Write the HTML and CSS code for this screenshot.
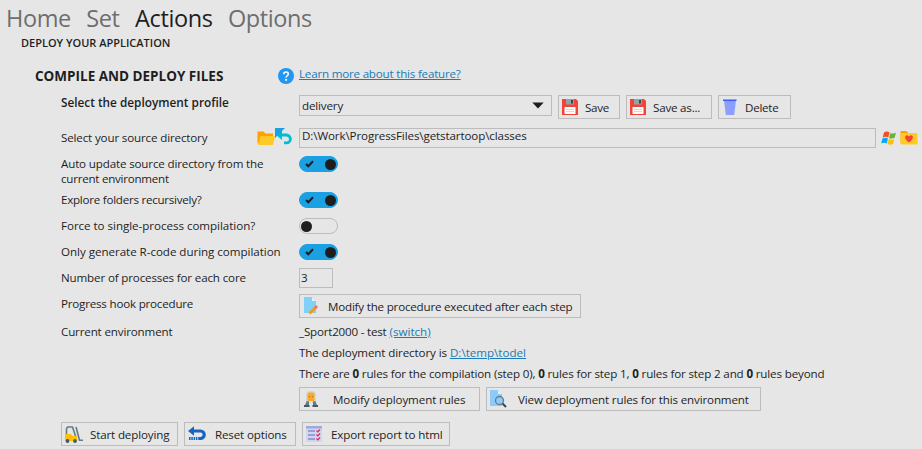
FILE: index.html
```html
<!DOCTYPE html>
<html lang="en">
<head>
<meta charset="utf-8">
<title>Deploy your application</title>
<link rel="stylesheet" href="styles.css">
</head>
<body>
<nav class="tabs"><a>Home</a><a>Set</a><a class="active">Actions</a><a>Options</a></nav>
<h1 class="page-title">DEPLOY YOUR APPLICATION</h1>
<main class="form">
  <h2 class="section-title">COMPILE AND DEPLOY FILES</h2>
  <div class="icons help"><svg width="16" height="16" viewBox="0 0 16 16"><circle cx="8" cy="8" r="8" fill="#2196f3"/><path d="M5.800 6.200c0-3 4.500-2.900 4.500-.2 0 1.700-2.200 1.800-2.200 3.500" fill="none" stroke="#fff" stroke-width="1.600"/><circle cx="8.100" cy="11.800" r="1.100" fill="#fff"/></svg></div>
  <div class="value learn"><a class="link t20">Learn more about this feature?</a></div>

  <div class="label strong">Select the deployment profile</div>
  <div class="value row">
    <div class="select"><span class="t15">delivery</span><svg width="12" height="7" viewBox="0 0 12 7"><path d="M.3.5h11.400L6 6.500z" fill="#1e1e1e"/></svg></div>
    <button class="btn save"><svg width="16" height="16" viewBox="0 0 16 16"><path d="M0 0h14l2 2v14H0z" fill="#f44336"/><path d="M4 0h8v5.500H4z" fill="#90a4ae"/><path d="M9 1h2v3.500H9z" fill="#37474f"/><path d="M2.500 8h11v7h-11z" fill="#fff"/><path d="M4 10.500h8M4 12.500h8" stroke="#cfd8dc"/></svg><span class="t25">Save</span></button>
    <button class="btn saveas"><svg width="16" height="16" viewBox="0 0 16 16"><path d="M0 0h14l2 2v14H0z" fill="#f44336"/><path d="M4 0h8v5.500H4z" fill="#90a4ae"/><path d="M9 1h2v3.500H9z" fill="#37474f"/><path d="M2.500 8h11v7h-11z" fill="#fff"/><path d="M4 10.500h8M4 12.500h8" stroke="#cfd8dc"/></svg><span class="t20">Save as...</span></button>
    <button class="btn delete"><svg width="16" height="16" viewBox="0 0 16 16"><path d="M2 1.500h12L12.200 16H3.800z" fill="#8c9eff"/><path d="M1 .5h13.500v1.500H1z" fill="#3d5afe"/></svg><span class="t25">Delete</span></button>
  </div>

  <div class="label low src t15">Select your source directory</div>
  <div class="icons source">
    <svg class="folder" width="18" height="16" viewBox="0 0 18 16"><path d="M.5 1.500h6l2 2H16v10H.5z" fill="#ffa000"/><path d="M3.500 6H18l-2 9H1z" fill="#ffca28"/></svg><svg width="18" height="17" viewBox="0 0 18 17"><path d="M6 7h5.500a3.800 3.800 0 0 1 0 7.800H9" fill="none" stroke="#00bcd4" stroke-width="2.800"/><path d="M1 7l6-5v10z" fill="#00bcd4"/><path d="M0 0h10L0 10z" fill="#1ba1e2"/></svg>
  </div>
  <div class="value row">
    <div class="input path t10">D:\Work\ProgressFiles\getstartoop\classes</div>
    <svg class="win" width="15" height="15" viewBox="0 0 15 15"><path d="M3 1.500q3-2 5.500 0L7.200 6.500q-2.500-1.500-5.500 0z" fill="#f25022"/><path d="M9.300 2q3 1.200 5.700-.3l-1.300 5q-2.700 1.500-5.700.2z" fill="#6cb33e"/><path d="M1.500 7.500q3-1.500 5.500 0l-1.300 5q-2.700-1.500-5.500 0z" fill="#03a9f4"/><path d="M7.800 8q3 1.300 5.500 0l-1.300 5q-2.600 1.500-5.500 0z" fill="#ffc107"/></svg>
    <svg class="fav" width="18" height="16" viewBox="0 0 18 16"><path d="M.5 1h6l2 2H17v10H.5z" fill="#ffa000"/><rect x=".5" y="3" width="17" height="11.500" rx="1" fill="#ffca28"/><path d="M9 12.500C2 8 6 3 9 6.500c3-3.500 7 1.500 0 6z" fill="#f44336"/></svg>
  </div>

  <div class="label two"><span class="t15">Auto update source directory from the</span><br><span class="t25">current environment</span></div>
  <div class="value"><div class="toggle on"><svg width="9" height="8" viewBox="0 0 9 8"><path d="M1 4l2.300 2.300L8 1.200" fill="none" stroke="#1e1e1e" stroke-width="2"/></svg><i></i></div></div>
  <div class="label t25">Explore folders recursively?</div>
  <div class="value"><div class="toggle on"><svg width="9" height="8" viewBox="0 0 9 8"><path d="M1 4l2.300 2.300L8 1.200" fill="none" stroke="#1e1e1e" stroke-width="2"/></svg><i></i></div></div>
  <div class="label t5">Force to single-process compilation?</div>
  <div class="value"><div class="toggle"><i></i></div></div>
  <div class="label t5">Only generate R-code during compilation</div>
  <div class="value"><div class="toggle on"><svg width="9" height="8" viewBox="0 0 9 8"><path d="M1 4l2.300 2.300L8 1.200" fill="none" stroke="#1e1e1e" stroke-width="2"/></svg><i></i></div></div>
  <div class="label low t15">Number of processes for each core</div>
  <div class="value"><div class="input number">3</div></div>
  <div class="label low t20">Progress hook procedure</div>
  <div class="value row"><button class="btn modify"><svg width="16" height="18" viewBox="0 0 16 18"><path d="M1 0h8l4 4v12H1z" fill="#81d0fb"/><path d="M9 0l4 4H9z" fill="#e1f5fe"/><path d="M6.500 16.500l6-6" stroke="#ff9800" stroke-width="2.800"/><path d="M12 11l2-2" stroke="#e57373" stroke-width="2.800"/></svg><span class="t20">Modify the procedure executed after each step</span></button></div>
  <div class="label t15">Current environment</div>
  <div class="value"><span class="t20">_Sport2000 - test</span> <a class="link">(switch)</a></div>
  <div class="value"><span class="t10">The deployment directory is</span> <a class="link">D:\temp\todel</a></div>
  <div class="value rules t15">There are <b>0</b> rules for the compilation (step 0), <b>0</b> rules for step 1, <b>0</b> rules for step 2 and <b>0</b> rules beyond</div>
  <div class="value row">
    <button class="btn mrules"><svg width="16" height="16" viewBox="0 0 16 16"><rect x="3" y="0" width="10" height="12" rx="4" fill="#cfd8dc"/><rect x="4.500" y="1.500" width="7" height="8.500" rx="1.500" fill="#ffa726"/><path d="M6 5.500h1M9 5.500h1" stroke="#a66a10"/><path d="M3.500 10l2.500 .5v3.500H2l1-2zM12.500 10l-2.500 .5v3.500H14l-1-2z" fill="#607d8b"/><path d="M7 10h2v6H7z" fill="#e6e6e6"/><path d="M1 15h5.500M9.500 15H15" stroke="#455a64" stroke-width="2"/></svg><span class="t10">Modify deployment rules</span></button>
    <button class="btn view"><svg width="18" height="18" viewBox="0 0 18 18"><path d="M1 0h8l4 4v12H1z" fill="#90caf9"/><path d="M9 0l4 4H9z" fill="#e1f5fe"/><circle cx="10.500" cy="10.500" r="4" fill="#90caf9" stroke="#607d8b" stroke-width="1.300"/><path d="M13.500 13.500l3.500 3.500" stroke="#37474f" stroke-width="2"/></svg><span class="t15">View deployment rules for this environment</span></button>
  </div>
</main>
<footer class="actions">
  <button class="btn start"><svg width="18" height="17" viewBox="0 0 18 17"><path d="M1.500 9V3l1-2h5l3 9M11 1l3.500 13.300H18" fill="none" stroke="#607d8b" stroke-width="1.600"/><path d="M0 8h6l1.500 2H12v5H0z" fill="#ffc107"/><circle cx="2.500" cy="15" r="1.900" fill="#455a64"/><circle cx="10" cy="15" r="1.900" fill="#455a64"/></svg><span class="t15">Start deploying</span></button>
  <button class="btn reset"><svg width="18" height="16" viewBox="0 0 18 16"><path d="M5 5h7.500a3.700 3.700 0 0 1 0 7.500H11" fill="none" stroke="#1565c0" stroke-width="3.200"/><path d="M0 5L6 .3v9.400z" fill="#1565c0"/><path d="M1 12.500h10" stroke="#1565c0" stroke-width="3.200" stroke-dasharray="1.500 .8"/></svg><span class="t15">Reset options</span></button>
  <button class="btn export"><svg width="16" height="16" viewBox="0 0 16 16"><path d="M0 0h16v16H0z" fill="#d1d5ee"/><path d="M0 0h16v2.500H0z" fill="#9fa8da"/><path d="M2 5h7M2 9h7M2 13h7" stroke="#5c6bc0" stroke-width="1.200"/><path d="M10.500 4.500l1.300 1.300L14 3.500M10.500 8.500l1.300 1.300L14 7.500M10.500 12.500l1.300 1.300 2.200-2.300" fill="none" stroke="#e91e63" stroke-width="1.200"/></svg><span class="t15">Export report to html</span></button>
</footer>
</body>
</html>
```
FILE: styles.css
```css
* { box-sizing: border-box; }
body { margin: 0; width: 922px; height: 449px; overflow: hidden; background: #e6e6e6; color: #1e1e1e; font: 11.6px/16px "Open Sans", "Noto Sans", sans-serif; white-space: nowrap; }
.tabs { display: flex; gap: 15.5px; height: 36px; padding: 2px 0 0 6px; font-size: 23.5px; letter-spacing: -.4px; line-height: 32px; color: #6e6e6e; }
.tabs .active { color: #1e1e1e; }
.page-title { margin: 0; height: 28px; padding-left: 21px; font-size: 11px; line-height: 14px; font-weight: 600; }
.form { display: grid; grid-template-columns: 238px 1fr; grid-template-rows: 31px 33px 28px 36px 26px 26px 24px 26px 30px 21px 21px 21px 35px; padding-left: 61px; }
.form > .label { grid-column: 1; }
.form > .value { grid-column: 2; }
.form > .src { grid-row: 3; }
.section-title { grid-area: 1 / 1; margin: 0 0 0 -26px; font-size: 13.5px; line-height: 24px; font-weight: 700; }
.icons { justify-self: end; display: flex; }
.help { grid-area: 1 / 1; padding: 4px 5px 0 0; }
.learn { padding-top: 2px; }
.strong { font-size: 11.8px; font-weight: 600; margin-top: -1px; }
.low { padding-top: 2px; }
.two { line-height: 15px; }
.source { grid-area: 3 / 1; padding-right: 6px; }
.folder { margin-top: 2px; }
.link { color: #1a7bb5; text-decoration: underline; }
.row { display: flex; align-items: flex-start; gap: 6px; }
.select { display: flex; justify-content: space-between; align-items: center; width: 253px; height: 21px; border: 1px solid #bcbcbc; padding: 0 7px 0 2px; }
.btn { display: flex; align-items: center; height: 24px; border: 1px solid #bcbcbc; background: none; padding: 0 0 0 3px; margin: 0; font: inherit; color: inherit; flex: none; }
.btn svg { flex: none; margin-right: 7px; }
.btn span { padding-top: 1px; }
.input { height: 20px; border: 1px solid #bcbcbc; padding-left: 2px; line-height: 13px; }
.path { width: 577px; flex: none; }
.win, .fav { flex: none; margin-top: 3px; }
.win { margin-left: -1px; }
.fav { margin-left: -2px; margin-top: 2px; }
.number { width: 34px; padding-left: 1px; line-height: 18px; }
.toggle { display: flex; align-items: center; width: 39px; height: 16px; border: 1px solid #bcbcbc; border-radius: 8px; padding: 0 1px; }
.toggle i { width: 11px; height: 11px; border-radius: 50%; background: #1e1e1e; }
.toggle.on { justify-content: space-between; border-color: #1ba1e2; background: #1ba1e2; padding-left: 5px; }
.save { width: 62px; }
.saveas { width: 86px; }
.delete { width: 73px; }
.modify { width: 282px; }
.modify svg { margin-right: 9px; }
.mrules { width: 181px; }
.mrules svg { margin-right: 14px; }
.view { width: 275px; padding-left: 2px; }
.view svg { margin-right: 11px; }
.actions { display: flex; gap: 6px; padding-left: 61px; }
.start { width: 117px; }
.reset { width: 112px; }
.reset svg, .export svg { margin-right: 9px; }
.export { width: 148px; }
.t5 { letter-spacing: -.04px; }
.t10 { letter-spacing: -.11px; }
.t15 { letter-spacing: -.15px; }
.t20 { letter-spacing: -.2px; }
.t25 { letter-spacing: -.25px; }
```
